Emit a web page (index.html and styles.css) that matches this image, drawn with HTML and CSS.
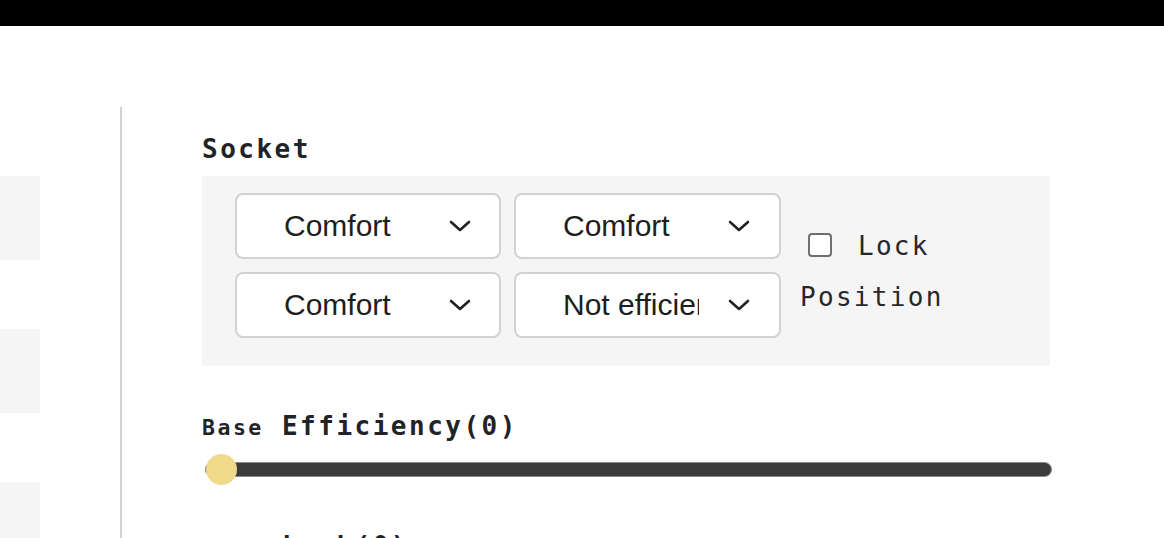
FILE: index.html
```html
<!DOCTYPE html>
<html>
<head>
<meta charset="utf-8">
<link rel="stylesheet" href="styles.css">
</head>
<body>
<div class="topbar"></div>
<div class="page">
  <div class="leftcol">
    <div class="leftblock"></div>
    <div class="leftblock"></div>
    <div class="leftblock"></div>
  </div>
  <div class="divider"></div>
  <div class="main">
    <h2 class="heading">Socket</h2>
    <div class="socket-box">
      <div class="select-grid">
        <div class="select"><span class="select-text">Comfort</span><svg class="chev" viewBox="0 0 22 12" width="22" height="12"><path d="M2 2 L11 10 L20 2" fill="none" stroke="#222" stroke-width="2.6" stroke-linecap="round" stroke-linejoin="round"/></svg></div>
        <div class="select"><span class="select-text">Comfort</span><svg class="chev" viewBox="0 0 22 12" width="22" height="12"><path d="M2 2 L11 10 L20 2" fill="none" stroke="#222" stroke-width="2.6" stroke-linecap="round" stroke-linejoin="round"/></svg></div>
        <div class="select"><span class="select-text">Comfort</span><svg class="chev" viewBox="0 0 22 12" width="22" height="12"><path d="M2 2 L11 10 L20 2" fill="none" stroke="#222" stroke-width="2.6" stroke-linecap="round" stroke-linejoin="round"/></svg></div>
        <div class="select"><span class="select-text">Not efficient</span><svg class="chev" viewBox="0 0 22 12" width="22" height="12"><path d="M2 2 L11 10 L20 2" fill="none" stroke="#222" stroke-width="2.6" stroke-linecap="round" stroke-linejoin="round"/></svg></div>
      </div>
      <label class="lock"><span class="checkbox"></span> Lock Position</label>
    </div>
    <div class="stat-title"><span class="small">Base</span> Efficiency(0)</div>
    <div class="slider">
      <div class="track"></div>
      <div class="thumb"></div>
    </div>
    <div class="stat-title second"><span class="small">Base</span> Luck(0)</div>
  </div>
</div>
</body>
</html>
```
FILE: styles.css
```css
html, body {
  margin: 0;
  padding: 0;
  background: #ffffff;
  overflow: hidden;
  height: 538px;
}

.topbar {
  height: 26px;
  background: #000000;
}

.page {
  display: flex;
  height: 431px;
  padding-top: 81px;
  overflow: hidden;
}

.leftcol {
  width: 40px;
  padding-top: 69px;
  display: flex;
  flex-direction: column;
  gap: 69px;
  flex-shrink: 0;
}

.leftblock {
  height: 84px;
  background: #f5f5f5;
  flex-shrink: 0;
}

.divider {
  width: 2px;
  margin-left: 80px;
  background: #d3d3d3;
  flex-shrink: 0;
}

.main {
  margin-left: 80px;
  width: 848px;
  padding-top: 24px;
  flex-shrink: 0;
  color: #222326;
  font-family: "DejaVu Sans Mono", monospace;
}

.heading {
  margin: 0;
  font-size: 26px;
  line-height: 36px;
  font-weight: bold;
  letter-spacing: 2.5px;
}

.socket-box {
  margin-top: 9px;
  height: 190px;
  box-sizing: border-box;
  padding: 17px 0 0 33px;
  background: #f5f5f5;
  display: flex;
  align-items: flex-start;
}

.select-grid {
  display: grid;
  grid-template-columns: 266px 267px;
  grid-auto-rows: 66px;
  gap: 13px;
}

.select {
  box-sizing: border-box;
  background: #ffffff;
  border: 2px solid #d2d2d2;
  border-radius: 8px;
  display: flex;
  align-items: center;
  padding-left: 47px;
  font-family: "Liberation Sans", Arial, sans-serif;
  font-size: 30px;
  color: #1e1e1e;
}

.select-text {
  width: 136px;
  overflow: hidden;
  white-space: nowrap;
  flex-shrink: 0;
}

.chev {
  margin-left: 29px;
  flex-shrink: 0;
}

.lock {
  margin-left: 19px;
  margin-top: 28px;
  width: 165px;
  font-size: 26px;
  line-height: 51px;
  letter-spacing: 2.3px;
  color: #26272b;
}

.checkbox {
  display: inline-block;
  box-sizing: border-box;
  width: 24px;
  height: 24px;
  margin-left: 8px;
  margin-right: 8px;
  border: 2px solid #6f6f6f;
  border-radius: 4px;
  background: #ffffff;
  vertical-align: -2px;
}

.stat-title {
  margin-top: 42px;
  font-size: 26px;
  line-height: 36px;
  font-weight: bold;
  letter-spacing: 2.5px;
}

.stat-title .small {
  font-size: 21.5px;
  letter-spacing: 2.5px;
}

.stat-title.second {
  margin-top: 43px;
}

.slider {
  position: relative;
  margin-top: 8px;
  height: 31px;
  display: flex;
  align-items: center;
}

.track {
  margin-left: 3px;
  width: 847px;
  height: 15px;
  flex-shrink: 0;
  box-sizing: border-box;
  background: #3b3b3b;
  border: 1.5px solid #8a8a8a;
  border-radius: 8px;
}

.thumb {
  position: absolute;
  left: 4px;
  top: 0;
  width: 31px;
  height: 31px;
  border-radius: 50%;
  background: #f1d98b;
}
```
